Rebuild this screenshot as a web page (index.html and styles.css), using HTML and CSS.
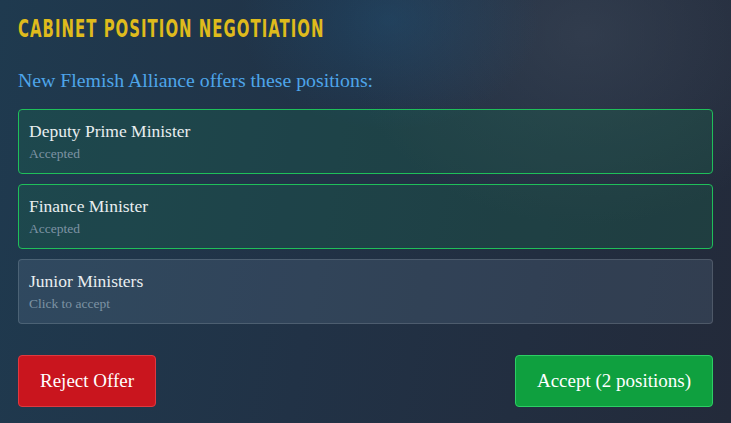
FILE: index.html
```html
<!DOCTYPE html>
<html lang="en">
<head>
  <meta charset="UTF-8">
  <meta name="viewport" content="width=device-width, initial-scale=1">
  <title>Cabinet Position Negotiation</title>
  <link rel="stylesheet" href="styles.css">
</head>

<body>

  <div class="negotiation">
    <h2 class="title"><span class="title-text">Cabinet Position Negotiation</span></h2>
    <p class="offer-text">New Flemish Alliance offers these positions:</p>

    <div class="position-list">
      <div class="position accepted">
        <div class="position-name">Deputy Prime Minister</div>
        <div class="position-status">Accepted</div>
      </div>
      <div class="position accepted">
        <div class="position-name">Finance Minister</div>
        <div class="position-status">Accepted</div>
      </div>
      <div class="position">
        <div class="position-name">Junior Ministers</div>
        <div class="position-status">Click to accept</div>
      </div>
    </div>

    <div class="actions">
      <button class="btn btn-reject">Reject Offer</button>
      <button class="btn btn-accept">Accept (2 positions)</button>
    </div>
  </div>

</body>
</html>
```

FILE: styles.css
```css
:root {
  --gold: #dfbb1c;
  --blue-text: #4ea5e9;
  --green: #1fbf5a;
  --red: #c9151e;
  --text-light: #e9eef0;
  --text-muted: #7d93a4;
}

* { margin: 0; padding: 0; box-sizing: border-box; }

html, body {
  height: 100%;
}

body {
  font-family: 'Liberation Serif', serif;
  background:
    radial-gradient(ellipse 150px 110px at 390px 20px, rgba(30, 85, 125, 0.4), transparent),
    radial-gradient(ellipse 240px 190px at 585px 35px, rgba(62, 72, 88, 0.55), transparent),
    linear-gradient(100deg, #1f3a4f 0%, #213246 45%, #232a3a 100%);
  color: var(--text-light);
}

.negotiation {
  padding: 14px 18px 16px;
}

.title {
  font-family: 'DejaVu Sans Condensed', sans-serif;
  font-weight: bold;
  font-size: 24px;
  letter-spacing: 1.5px;
  text-transform: uppercase;
  color: var(--gold);
  line-height: 30px;
  white-space: nowrap;
}

/* no condensed display face offline, so squeeze the text horizontally */
.title-text {
  display: inline-block;
  transform: scaleX(0.69);
  transform-origin: left center;
}

.offer-text {
  margin-top: 24px;
  font-size: 19.8px;
  line-height: 24px;
  color: var(--blue-text);
}

.position-list {
  display: flex;
  flex-direction: column;
  gap: 10px;
  margin-top: 17px;
}

.position {
  height: 65px;
  padding: 10px 10px;
  border: 1px solid rgba(255, 255, 255, 0.14);
  border-radius: 4px;
  background: rgba(120, 150, 175, 0.18);
  cursor: pointer;
}

.position.accepted {
  border-color: var(--green);
  background: rgba(25, 110, 80, 0.28);
}

.position-name {
  font-size: 17.5px;
  line-height: 22px;
}

.position-status {
  margin-top: 4px;
  font-size: 13.5px;
  line-height: 16px;
  color: var(--text-muted);
}

.actions {
  display: flex;
  justify-content: space-between;
  margin-top: 31px;
}

.btn {
  height: 52px;
  padding: 0 21px;
  font-family: 'Liberation Serif', serif;
  font-size: 19px;
  color: white;
  border-radius: 4px;
  cursor: pointer;
}

.btn-reject {
  background: var(--red);
  border: 1px solid #e0383f;
}

.btn-accept {
  background: #0fa03f;
  border: 1px solid #2ccf64;
}
```
